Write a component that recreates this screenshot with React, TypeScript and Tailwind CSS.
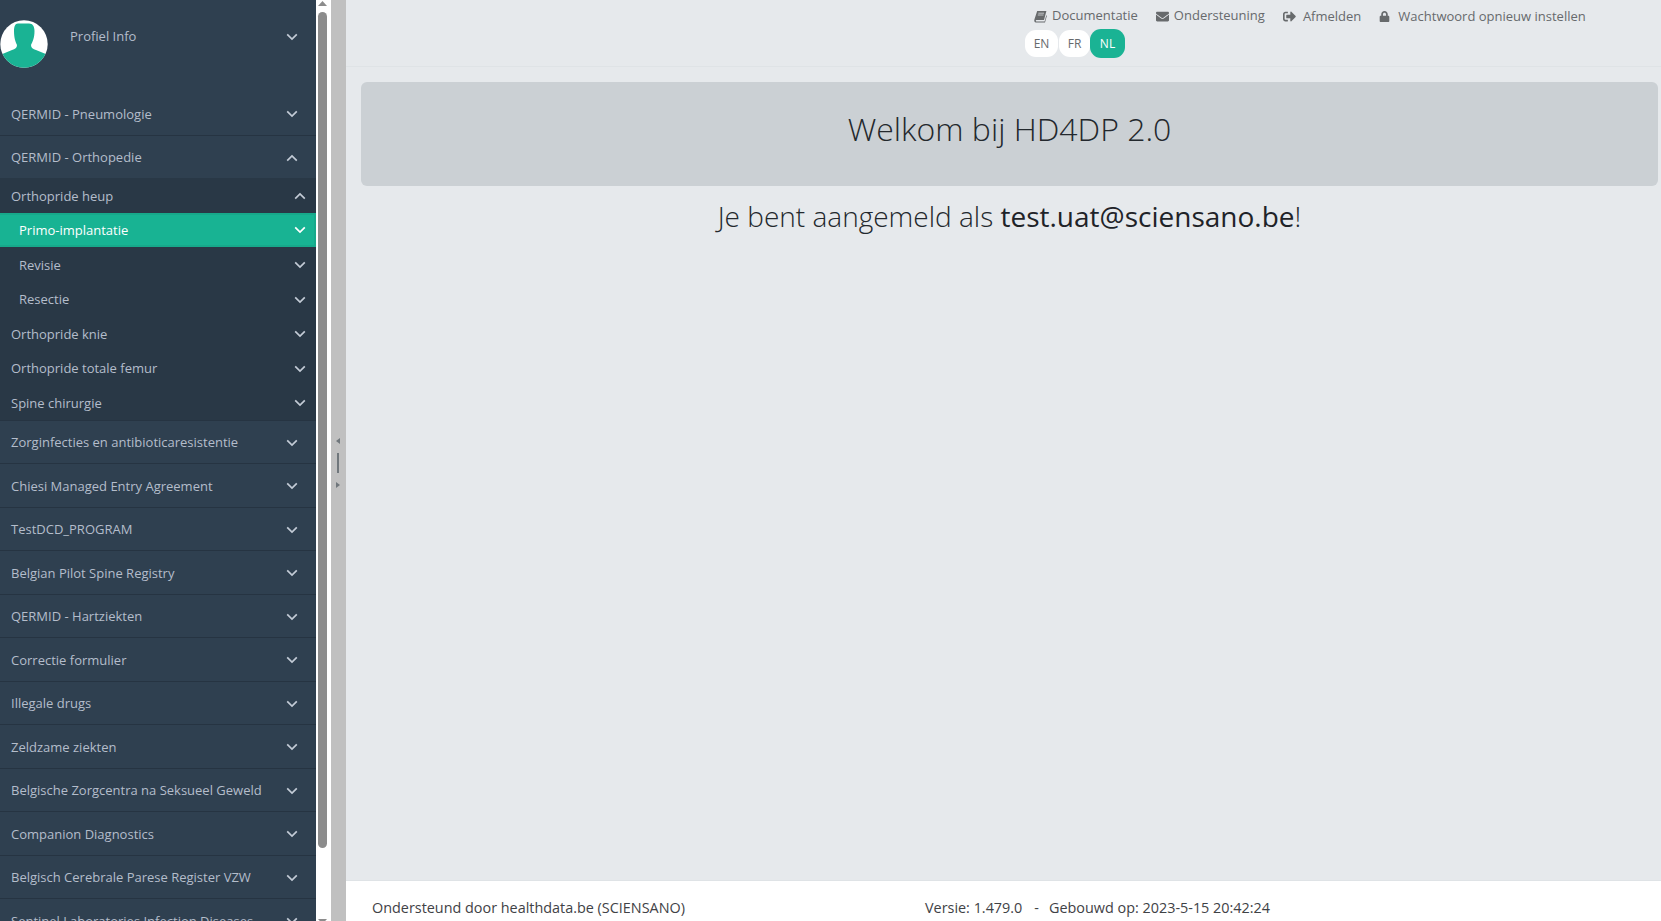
import React from "react";
import { FaEnvelope, FaLock, FaSignOutAlt } from "react-icons/fa";

const font = "font-['Open_Sans',sans-serif]";

function Chevron({ up, className }: { up?: boolean; className: string }) {
  return (
    <svg width="12" height="8" viewBox="0 0 12 8" className={"shrink-0 " + className} fill="none" stroke="currentColor" strokeWidth="1.7">
      <path d={up ? "M1.2 6.6 L6 2 L10.8 6.6" : "M1.2 1.4 L6 6 L10.8 1.4"} />
    </svg>
  );
}

function Book() {
  return (
    <svg width="13" height="13" viewBox="0 0 13 13" className="shrink-0">
      <path d="M3.2 1 H12.4 L10 10 H2.4 C1.6 10 1.6 11.5 2.4 11.5 H10.6 L12.3 5.2 L12.9 5.8 L11 12.6 H2 C0.4 12.6 0 11 0.4 9.6 Z" fill="#676a6c" />
      <path d="M4.3 3.2 H10 M3.8 5 H9.5" stroke="#e6e9ec" strokeWidth="0.7" />
    </svg>
  );
}

function Avatar() {
  return (
    <svg width="48" height="48" viewBox="0 0 48 48" className="shrink-0">
      <defs>
        <clipPath id="avatar-clip">
          <circle cx="24" cy="24" r="23.7" />
        </clipPath>
      </defs>
      <circle cx="24" cy="24" r="23.7" fill="#ffffff" />
      <g clipPath="url(#avatar-clip)" fill="#1ab394">
        <path d="M18 3.5 H29 C33 3.5 34.5 7 34.5 11 C34.5 18 32.5 22 31 25 C31 28 33 29 36 30 L47 34.5 V48 H0 V35 L12 30 C15 29 17 28 17 25 C15.5 22 14 18 14 11 C14 7 15 3.5 18 3.5 Z" />
      </g>
    </svg>
  );
}

function TopRow({ label, open }: { label: string; open?: boolean }) {
  return (
    <div className="h-[43.5px] shrink-0 flex items-center justify-between pt-[2px] pl-[11px] pr-[18px] border-b border-[#263442] text-[13px] text-[#b4bdcb]">
      <span className="whitespace-nowrap">{label}</span>
      <Chevron up={open} className="text-[#c3cbd6]" />
    </div>
  );
}

function SubRow({ label, indent, active, open }: { label: string; indent?: boolean; active?: boolean; open?: boolean }) {
  return (
    <div
      className={
        active
          ? "h-[34.5px] shrink-0 flex items-center justify-between pt-px pl-[19px] pr-[8px] bg-[#18b393] border-y-2 border-r-2 border-[#17a98b] text-[13px] text-white"
          : indent
            ? "h-[34.5px] shrink-0 flex items-center justify-between pt-[2px] pl-[19px] pr-[10px] text-[13px] text-[#b4bdcb]"
            : "h-[34.5px] shrink-0 flex items-center justify-between pt-[2px] pl-[11px] pr-[10px] text-[13px] text-[#b4bdcb]"
      }
    >
      <span className="whitespace-nowrap">{label}</span>
      <Chevron up={open} className={active ? "text-white" : "text-[#c3cbd6]"} />
    </div>
  );
}

function TopLink({ icon, label, className }: { icon: React.ReactNode; label: string; className: string }) {
  return (
    <span className={"flex items-center whitespace-nowrap " + className}>
      {icon}
      <span>{label}</span>
    </span>
  );
}

const after = [
  "Zorginfecties en antibioticaresistentie",
  "Chiesi Managed Entry Agreement",
  "TestDCD_PROGRAM",
  "Belgian Pilot Spine Registry",
  "QERMID - Hartziekten",
  "Correctie formulier",
  "Illegale drugs",
  "Zeldzame ziekten",
  "Belgische Zorgcentra na Seksueel Geweld",
  "Companion Diagnostics",
  "Belgisch Cerebrale Parese Register VZW",
  "Sentinel Laboratories Infection Diseases",
];

export default function App() {
  return (
    <div className={"h-[921px] w-[1661px] flex overflow-hidden bg-[#e6e9ec] " + font}>
      <aside className="w-[316px] shrink-0 h-full overflow-hidden bg-[#2f4050] flex flex-col">
        <div className="h-[92px] shrink-0 flex items-start">
          <div className="mt-5 flex items-center w-full pr-[18px]">
            <Avatar />
            <span className="ml-[22px] -mt-[14px] flex-1 text-[13px] text-[#b4bdcb]">Profiel Info</span>
            <Chevron className="-mt-[14px] text-[#c3cbd6]" />
          </div>
        </div>
        <TopRow label="QERMID - Pneumologie" />
        <TopRow label="QERMID - Orthopedie" open />
        <div className="bg-[#293846] shrink-0 -mt-px border-b border-[#263442] flex flex-col">
          <SubRow label="Orthopride heup" open />
          <SubRow label="Primo-implantatie" indent active />
          <SubRow label="Revisie" indent />
          <SubRow label="Resectie" indent />
          <SubRow label="Orthopride knie" />
          <SubRow label="Orthopride totale femur" />
          <SubRow label="Spine chirurgie" />
        </div>
        {after.map((l) => (
          <TopRow key={l} label={l} />
        ))}
      </aside>

      <div className="w-[15px] shrink-0 h-full bg-white flex flex-col items-center pr-[3px]">
        <svg width="9" height="5" viewBox="0 0 9 5" className="mt-[1px] shrink-0">
          <path d="M4.5 0 L9 5 H0 Z" fill="#8c8c8c" />
        </svg>
        <div className="w-[9px] h-[836px] mt-[6px] shrink-0 rounded-full bg-[#8c8c8c]" />
        <svg width="9" height="5" viewBox="0 0 9 5" className="mt-[71px] shrink-0">
          <path d="M4.5 5 L9 0 H0 Z" fill="#8c8c8c" />
        </svg>
      </div>

      <div className="w-[15px] shrink-0 h-full bg-[#c0c0c0] flex flex-col items-center justify-center gap-[9px] pt-[5px] pr-[2px]">
        <svg width="4" height="6" viewBox="0 0 4 6"><path d="M4 0 V6 L0 3 Z" fill="#70777c" /></svg>
        <div className="w-[2px] h-[20px] bg-[#70777c]" />
        <svg width="4" height="6" viewBox="0 0 4 6"><path d="M0 0 V6 L4 3 Z" fill="#70777c" /></svg>
      </div>

      <main className="flex-1 min-w-0 h-full flex flex-col">
        <header className="h-[67px] shrink-0 border-b border-[#dfe3e6] pl-[679px] text-[13px] text-[#676a6c]">
          <div className="flex items-center h-[29px] pl-[9px] pt-[3px]">
            <TopLink icon={<span className="mr-[5px]"><Book /></span>} label="Documentatie" className="mr-[18px]" />
            <TopLink icon={<FaEnvelope size={13} className="mr-[5px]" />} label="Ondersteuning" className="mr-[18px]" />
            <TopLink icon={<FaSignOutAlt size={13} className="mr-[7px]" />} label="Afmelden" className="mr-[18px] mt-px" />
            <TopLink icon={<FaLock size={11} className="mr-[8px]" />} label="Wachtwoord opnieuw instellen" className="mt-px" />
          </div>
          <div className="flex items-center text-[12px]">
            <span className="h-[27px] w-[33px] flex items-center justify-center bg-white rounded-[11px]">EN</span>
            <span className="h-[27px] w-[31px] ml-px flex items-center justify-center bg-white rounded-[11px]">FR</span>
            <span className="h-[29px] w-[35px] flex items-center justify-center bg-[#1ab394] text-white rounded-[11px]">NL</span>
          </div>
        </header>

        <div className="flex-1 min-h-0 pl-[15px] pr-[3px] pt-[15px]">
          <div className="h-[104px] pb-[10px] bg-[#cbd0d4] rounded-[6px] flex items-center justify-center text-[32px] font-light text-[#23282d]">
            Welkom bij HD4DP 2.0
          </div>
          <div className="mt-[9px] text-center text-[28px] font-light leading-[42px] text-[#23282d]">
            Je bent aangemeld als <span className="font-normal text-[#1f2328]">test.uat@sciensano.be</span>!
          </div>
        </div>

        <footer className="h-[41px] shrink-0 bg-white border-t border-[#dfe3e6] flex items-start pt-[17px] text-[14.4px] leading-[19px] text-[#3f4246]">
          <span className="ml-[26px] w-[553px] whitespace-nowrap">Ondersteund door healthdata.be (SCIENSANO)</span>
          <span className="whitespace-nowrap">Versie: 1.479.0<span className="ml-[12px] mr-[10px]">-</span>Gebouwd op: 2023-5-15 20:42:24</span>
        </footer>
      </main>
    </div>
  );
}
